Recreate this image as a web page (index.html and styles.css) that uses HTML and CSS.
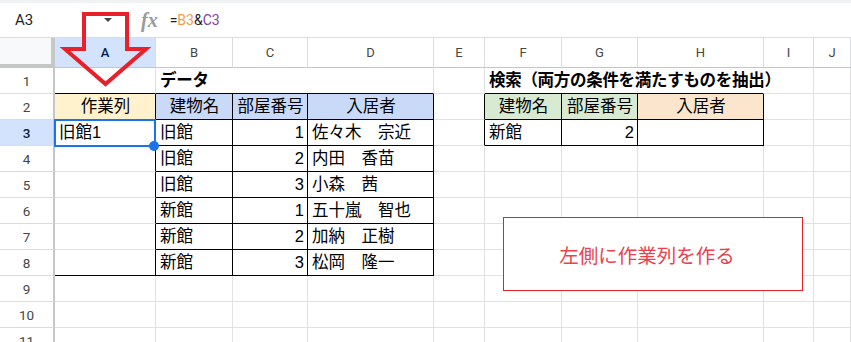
FILE: index.html
```html
<!DOCTYPE html>
<html lang="ja">
<head>
    <meta charset="UTF-8">
    <title>作業列</title>
    <link rel="stylesheet" href="styles.css">
</head>
<body>
    <div class="app">
        <div class="formula-bar">
            <div class="name-box">A3<span class="caret"></span></div>
            <div class="fx">fx</div>
            <div class="formula">=<span class="ref1">B3</span>&amp;<span class="ref2">C3</span></div>
        </div>

        <div class="sheet">
            <!-- column headers -->
            <div class="corner"></div>
            <div class="ch on">A</div>
            <div class="ch">B</div>
            <div class="ch">C</div>
            <div class="ch">D</div>
            <div class="ch">E</div>
            <div class="ch">F</div>
            <div class="ch">G</div>
            <div class="ch">H</div>
            <div class="ch">I</div>
            <div class="ch">J</div>

            <!-- row 1 -->
            <div class="rh">1</div>
            <div class="c kb"></div>
            <div class="c kb span3 b">データ</div>
            <div class="c"></div>
            <div class="c kb span3 b nr">検索（両方の条件を満たすものを抽出）</div>
            <div class="c"></div>
            <div class="c"></div>

            <!-- row 2 -->
            <div class="rh">2</div>
            <div class="c kr kb ctr yel">作業列</div>
            <div class="c kr kb ctr blu">建物名</div>
            <div class="c kr kb ctr blu">部屋番号</div>
            <div class="c kr kb ctr blu">入居者</div>
            <div class="c kr"></div>
            <div class="c kr kb ctr grn">建物名</div>
            <div class="c kr kb ctr grn">部屋番号</div>
            <div class="c kr kb ctr org">入居者</div>
            <div class="c"></div>
            <div class="c"></div>

            <!-- row 3 -->
            <div class="rh on">3</div>
            <div class="c kr sel">旧館1</div>
            <div class="c kr kb">旧館</div>
            <div class="c kr kb num">1</div>
            <div class="c kr kb">佐々木　宗近</div>
            <div class="c kr"></div>
            <div class="c kr kb">新館</div>
            <div class="c kr kb num">2</div>
            <div class="c kr kb"></div>
            <div class="c"></div>
            <div class="c"></div>

            <!-- row 4 -->
            <div class="rh">4</div>
            <div class="c kr"></div>
            <div class="c kr kb">旧館</div>
            <div class="c kr kb num">2</div>
            <div class="c kr kb">内田　香苗</div>
            <div class="c"></div>
            <div class="c"></div>
            <div class="c"></div>
            <div class="c"></div>
            <div class="c"></div>
            <div class="c"></div>

            <!-- row 5 -->
            <div class="rh">5</div>
            <div class="c kr"></div>
            <div class="c kr kb">旧館</div>
            <div class="c kr kb num">3</div>
            <div class="c kr kb">小森　茜</div>
            <div class="c"></div>
            <div class="c"></div>
            <div class="c"></div>
            <div class="c"></div>
            <div class="c"></div>
            <div class="c"></div>

            <!-- row 6 -->
            <div class="rh">6</div>
            <div class="c kr"></div>
            <div class="c kr kb">新館</div>
            <div class="c kr kb num">1</div>
            <div class="c kr kb">五十嵐　智也</div>
            <div class="c"></div>
            <div class="c"></div>
            <div class="c"></div>
            <div class="c"></div>
            <div class="c"></div>
            <div class="c"></div>

            <!-- row 7 -->
            <div class="rh">7</div>
            <div class="c kr"></div>
            <div class="c kr kb">新館</div>
            <div class="c kr kb num">2</div>
            <div class="c kr kb">加納　正樹</div>
            <div class="c"></div>
            <div class="c"></div>
            <div class="c"></div>
            <div class="c"></div>
            <div class="c"></div>
            <div class="c"></div>

            <!-- row 8 -->
            <div class="rh">8</div>
            <div class="c kr kb"></div>
            <div class="c kr kb">新館</div>
            <div class="c kr kb num">3</div>
            <div class="c kr kb">松岡　隆一</div>
            <div class="c"></div>
            <div class="c"></div>
            <div class="c"></div>
            <div class="c"></div>
            <div class="c"></div>
            <div class="c"></div>

            <!-- rows 9-11 -->
            <div class="rh">9</div>
            <div class="c"></div><div class="c"></div><div class="c"></div><div class="c"></div><div class="c"></div>
            <div class="c"></div><div class="c"></div><div class="c"></div><div class="c"></div><div class="c"></div>

            <div class="rh">10</div>
            <div class="c"></div><div class="c"></div><div class="c"></div><div class="c"></div><div class="c"></div>
            <div class="c"></div><div class="c"></div><div class="c"></div><div class="c"></div><div class="c"></div>

            <div class="rh">11</div>
            <div class="c"></div><div class="c"></div><div class="c"></div><div class="c"></div><div class="c"></div>
            <div class="c"></div><div class="c"></div><div class="c"></div><div class="c"></div><div class="c"></div>
        </div>

        <!-- drawing objects on the sheet -->
        <svg class="arrow" width="160" height="95" viewBox="0 0 160 95">
            <polygon points="84,14 127,14 127,49 146,49 105.5,84 65,49 84,49" fill="none" stroke="#e8202a" stroke-width="4"/>
        </svg>
        <div class="note">左側に作業列を作る</div>
    </div>
</body>
</html>
```

FILE: styles.css
```css
* {
    margin: 0;
    padding: 0;
    box-sizing: border-box;
}
body {
    background: #fff;
    width: 851px;
    height: 342px;
    overflow: hidden;
    font-family: "Liberation Sans", "Noto Sans CJK JP", sans-serif;
}
.app {
    position: relative;
}

/* formula bar */
.formula-bar {
    display: flex;
    align-items: center;
    height: 38px;
    padding-left: 15px;
    border-top: 3px solid #f0f2f4;
    border-bottom: 1px solid #dadce0;
    font-family: Roboto, "Liberation Sans", sans-serif;
    font-size: 14px;
    color: #1f1f1f;
}
.name-box {
    display: flex;
    align-items: center;
    justify-content: space-between;
    width: 101px;
    padding-right: 4px;
    font-size: 15px;
}
.caret {
    width: 0;
    height: 0;
    border-left: 4px solid transparent;
    border-right: 4px solid transparent;
    border-top: 4px solid #444746;
}
.fx {
    margin-left: 25px;
    font-family: "Liberation Serif", serif;
    font-style: italic;
    font-weight: bold;
    font-size: 20px;
    color: #9a9a9a;
}
.formula {
    margin-left: 12px;
}
.ref1 {
    color: #f39c4b;
}
.ref2 {
    color: #82429e;
}

/* grid */
.sheet {
    display: grid;
    grid-template-columns: 55px 101px 77px 75px 126px 51px 77px 76px 126px 50px 1fr;
    grid-template-rows: 30px repeat(11, 26px);
}
.corner {
    background: #f8f9fa;
    border-right: 4px solid #c4c7c5;
    border-bottom: 4px solid #c4c7c5;
}
.ch {
    display: flex;
    align-items: center;
    justify-content: center;
    border-right: 1px solid #dadce0;
    border-bottom: 1px solid #c4c7c5;
    font-family: Roboto, sans-serif;
    font-size: 13px;
    color: #444746;
}
.rh {
    display: flex;
    align-items: center;
    justify-content: center;
    border-right: 2px solid #c4c7c5;
    border-bottom: 1px solid #dadce0;
    font-family: Roboto, sans-serif;
    font-size: 13.5px;
    color: #444746;
}
.ch.on,
.rh.on {
    background: #d3e3fd;
    color: #041e49;
    font-weight: 500;
}
.c {
    display: flex;
    align-items: center;
    padding: 0 3px 0 4px;
    border-right: 1px solid #e1e1e1;
    border-bottom: 1px solid #e1e1e1;
    font-size: 16.5px;
    line-height: 1.2;
    color: #000;
    white-space: nowrap;
}
.span3 {
    grid-column: span 3;
}
.nr {
    border-right-color: transparent;
}
.kr {
    border-right-color: #000;
}
.kb {
    border-bottom-color: #000;
}
.b {
    font-weight: bold;
    letter-spacing: -0.3px;
}
.ctr {
    justify-content: center;
}
.num {
    justify-content: flex-end;
}
.yel {
    background: #fff2cc;
}
.blu {
    background: #c9daf8;
}
.grn {
    background: #d9ead3;
}
.org {
    background: #fce5cd;
}

/* selected cell */
.sel {
    position: relative;
    z-index: 2;
}
.sel:after {
    content: '';
    position: absolute;
    left: -1px;
    top: -1px;
    right: -1px;
    bottom: -2px;
    border: 2px solid #1a73e8;
}
.sel:before {
    content: '';
    position: absolute;
    left: 94px;
    top: 21px;
    width: 10px;
    height: 10px;
    border-radius: 50%;
    background: #1a73e8;
    z-index: 1;
}

/* shapes */
.arrow {
    position: absolute;
    left: 0;
    top: 0;
    z-index: 5;
}
.note {
    position: absolute;
    left: 503px;
    top: 217px;
    width: 300px;
    height: 74px;
    display: flex;
    align-items: center;
    justify-content: center;
    padding-right: 12px;
    background: #fff;
    border: 1px solid #e8202a;
    font-family: "Noto Sans CJK JP", sans-serif;
    font-size: 19.5px;
    color: #e8434c;
    z-index: 5;
}
```
